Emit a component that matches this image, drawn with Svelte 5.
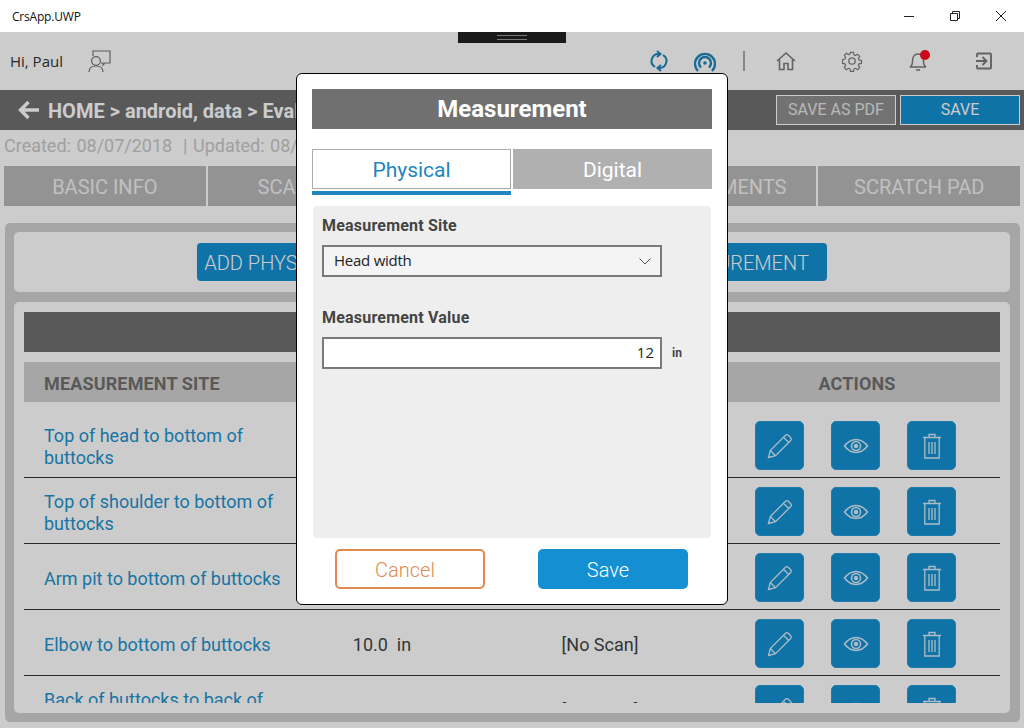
<script lang="ts">
  const tabs = ['BASIC INFO', 'SCAN INFO', 'PHOTOS', 'ATTACHMENTS', 'SCRATCH PAD'];
  const rows = [
    { site: 'Top of head to bottom of buttocks', value: '10.0', scan: '[No Scan]' },
    { site: 'Top of shoulder to bottom of buttocks', value: '10.0', scan: '[No Scan]' },
    { site: 'Arm pit to bottom of buttocks', value: '10.0', scan: '[No Scan]' },
    { site: 'Elbow to bottom of buttocks', value: '10.0', scan: '[No Scan]' },
    { site: 'Back of buttocks to back of knee', value: '10.0', scan: '[No Scan]' }
  ];

  let activeTab = $state('physical');
  let amount = $state('12');
</script>

<div class="window">
  <header class="titlebar">
    <span class="app-name">CrsApp.UWP</span>
    <div class="win-controls">
      <svg width="12" height="12" viewBox="0 0 12 12"><path d="M1 6.500h10" stroke="#222" fill="none"/></svg>
      <svg width="12" height="12" viewBox="0 0 12 12"><path d="M1.500 3.500h7v7h-7zM3.500 3.500v-2h7v7h-2" stroke="#222" fill="none"/></svg>
      <svg width="12" height="12" viewBox="0 0 12 12"><path d="M1 1l10 10M11 1L1 11" stroke="#222" fill="none"/></svg>
    </div>
  </header>

  <div class="app">
    <div class="topbar">
      <span class="greeting">Hi, Paul</span>
      <svg class="user-icon" width="24" height="24" viewBox="0 0 24 24" fill="none" stroke="#777" stroke-width="1.200">
        <path d="M6 7V2h17v12h-5l-2 2v-2h-2"/>
        <circle cx="9" cy="12" r="4.400"/>
        <path d="M2 23c0-4 3-6 7-6s7 2 7 6"/>
      </svg>
      <div class="top-icons">
        <svg class="ic-sync" width="18" height="22" viewBox="0 0 18 22" fill="none" stroke="#1f86ba" stroke-width="2">
          <path d="M9 4A7 7 0 0 0 5 17"/>
          <path d="M9 18A7 7 0 0 0 13 5"/>
          <path d="M7 1l3.500 3L7 7M11 15l-3.500 3 3.500 3"/>
        </svg>
        <svg class="ic-signal" width="22" height="24" viewBox="0 0 22 24" fill="none" stroke="#1f86ba" stroke-width="2.400">
          <path d="M4 20a10 10 0 1 1 14 0"/>
          <path d="M7 16.500a6 6 0 1 1 8 0"/>
          <circle cx="11" cy="12" r="1.800" fill="#1f86ba" stroke="none"/>
        </svg>
        <span class="divider"></span>
        <svg class="ic-home" width="20" height="20" viewBox="0 0 20 20" fill="none" stroke="#7c7c7c" stroke-width="1.600">
          <path d="M1 10l9-8 9 8M3.500 8v10.500h4.500v-6h4v6h4.500V8"/>
        </svg>
        <svg class="ic-gear" width="22" height="22" viewBox="0 0 22 22" fill="none" stroke="#7c7c7c" stroke-width="1.300">
          <circle cx="11" cy="11" r="3.200"/>
          <path d="M9.300 1.500h3.400l.5 2.700 1.700.7 2.300-1.500 2.400 2.400-1.500 2.300.7 1.700 2.700.5v3.400l-2.700.5-.7 1.700 1.500 2.300-2.400 2.400-2.300-1.500-1.700.7-.5 2.700H9.300l-.5-2.700-1.700-.7-2.300 1.500-2.400-2.400 1.500-2.300-.7-1.700-2.700-.5V9.300l2.700-.5.7-1.700-1.500-2.300 2.400-2.400 2.300 1.500 1.700-.7z" transform="translate(1.100 1.100) scale(.9)"/>
        </svg>
        <span class="bell">
          <svg width="20" height="22" viewBox="0 0 20 22" fill="none" stroke="#7c7c7c" stroke-width="1.500">
            <path d="M2 17c2-1 2.500-3 2.500-6 0-4 2-7 5.500-7s5.500 3 5.500 7c0 3 .5 5 2.500 6zM8 20h4"/>
          </svg>
          <i class="dot"></i>
        </span>
        <svg class="ic-exit" width="18" height="18" viewBox="0 0 18 18" fill="none" stroke="#7c7c7c" stroke-width="1.900">
          <path d="M2 5V2.500A1 1 0 0 1 3 1.500h12a1 1 0 0 1 1 1v13a1 1 0 0 1-1 1H3a1 1 0 0 1-1-1V13M1 9h10M7.500 5l4 4-4 4"/>
        </svg>
      </div>
    </div>

    <div class="crumbbar">
      <svg width="21" height="20" viewBox="0 0 21 20" fill="none" stroke="#fff" stroke-width="3.400">
        <path d="M10.500 2L2.500 10l8 8M3 10h18"/>
      </svg>
      <span class="crumbs">HOME &gt; android, data &gt; Evaluation</span>
      <button class="btn-pdf">SAVE AS PDF</button>
      <button class="btn-save">SAVE</button>
    </div>

    <div class="dates">Created: 08/07/2018 &nbsp;| Updated: 08/07/2018</div>

    <nav class="tabs">
      {#each tabs as tab}
        <div class="tab">{tab}</div>
      {/each}
    </nav>

    <main class="panel">
      <div class="add-card">
        <button class="btn-add first">ADD PHYSICAL MEASUREMENT</button>
        <button class="btn-add second">ADD DIGITAL MEASUREMENT</button>
      </div>

      <section class="table-card">
        <div class="table-title"></div>
        <div class="row-grid table-head">
          <span>MEASUREMENT SITE</span>
          <span class="center">VALUE</span>
          <span class="center">SCAN</span>
          <span class="center actions-head">ACTIONS</span>
        </div>
        <div class="rows">
          {#each rows as row}
            <div class="row-grid row">
              <span class="site">{row.site}</span>
              <span class="center cell">{row.value}&nbsp; in</span>
              <span class="center cell">{row.scan}</span>
              <div class="actions">
                <button class="act" aria-label="Edit">
                  <svg width="26" height="26" viewBox="0 0 26 26" fill="none" stroke="#d8ecf7" stroke-width="1.300">
                    <path d="M1.500 24.500l1.800-7L18.500 2.300a2 2 0 0 1 2.800 0l2.400 2.400a2 2 0 0 1 0 2.800L8.500 22.700zM3.300 17.500l5.200 5.200M16.500 4.300l5.200 5.200"/>
                  </svg>
                </button>
                <button class="act" aria-label="View">
                  <svg width="26" height="16" viewBox="0 0 26 16" fill="none" stroke="#d8ecf7" stroke-width="1.500">
                    <path d="M1.500 8C5 3.500 9 1.500 13 1.500S21 3.500 24.500 8C21 12.500 17 14.500 13 14.500S5 12.500 1.500 8z"/>
                    <circle cx="13" cy="8" r="4.500"/>
                    <circle cx="13" cy="8" r="1.500" fill="#d8ecf7"/>
                  </svg>
                </button>
                <button class="act" aria-label="Delete">
                  <svg width="20" height="26" viewBox="0 0 20 26" fill="none" stroke="#d8ecf7" stroke-width="1.300">
                    <path d="M1 4.500h18M7 4.500V1.500h6v3M2.800 4.500v20.500h14.400V4.500M7 9v12M10 9v12M13 9v12"/>
                  </svg>
                </button>
              </div>
            </div>
          {/each}
        </div>
      </section>
    </main>

    <div class="scrim"></div>
    <div class="debug-strip"><i></i></div>

    <div class="dialog">
      <h2 class="dlg-title">Measurement</h2>
      <div class="dlg-tabs">
        <button class="dlg-tab" class:on={activeTab === 'physical'} onclick={() => (activeTab = 'physical')}>Physical</button>
        <button class="dlg-tab" class:on={activeTab === 'digital'} onclick={() => (activeTab = 'digital')}>Digital</button>
      </div>
      <div class="dlg-body">
        <div class="field-label">Measurement Site</div>
        <div class="select">
          <span>Head width</span>
          <svg width="12" height="7" viewBox="0 0 12 7" fill="none" stroke="#555"><path d="M.5.500L6 6 11.500.500"/></svg>
        </div>
        <div class="field-label second">Measurement Value</div>
        <div class="value-row">
          <input class="value" bind:value={amount} />
          <span class="unit">in</span>
        </div>
      </div>
      <div class="dlg-actions">
        <button class="btn-cancel">Cancel</button>
        <button class="btn-ok">Save</button>
      </div>
    </div>
  </div>
</div>

<style>
  :global(body) {
    margin: 0;
    overflow: hidden;
  }

  .window {
    width: 1024px;
    height: 728px;
    display: flex;
    flex-direction: column;
    overflow: hidden;
    background: #fff;
    font-family: Roboto, sans-serif;
  }

  button {
    font-family: inherit;
    padding: 0;
    cursor: pointer;
  }

  .titlebar {
    height: 32px;
    flex: none;
    display: flex;
    align-items: center;
    justify-content: space-between;
    padding: 0 17px 0 12px;
  }

  .app-name {
    font: 12px "Open Sans", sans-serif;
    letter-spacing: -0.2px;
    color: #111;
  }

  .win-controls {
    display: flex;
    gap: 34px;
  }

  .app {
    flex: 1;
    position: relative;
    overflow: hidden;
    display: flex;
    flex-direction: column;
  }

  .topbar {
    height: 58px;
    flex: none;
    display: flex;
    align-items: center;
    padding-left: 10px;
  }

  .greeting {
    font: 15px "Open Sans", sans-serif;
    color: #333;
  }

  .user-icon {
    margin-left: 24px;
  }

  .top-icons {
    margin-left: auto;
    display: flex;
    align-items: center;
    padding-right: 31px;
  }

  .ic-sync { margin-right: 26px; }
  .ic-signal { margin: 3px 27px 0 0; }
  .divider {
    width: 2px;
    height: 20px;
    background: #a8a8a8;
    margin-right: 31px;
  }
  .ic-home { margin-right: 45px; }
  .ic-gear { margin-right: 45px; }
  .bell {
    position: relative;
    display: flex;
    margin-right: 47px;
  }
  .dot {
    position: absolute;
    top: 0;
    right: -2px;
    width: 10px;
    height: 10px;
    border-radius: 50%;
    background: #ff0a22;
  }

  .crumbbar {
    height: 40px;
    flex: none;
    background: #707070;
    display: flex;
    align-items: center;
    padding: 0 4px 0 18px;
    gap: 4px;
  }

  .crumbs {
    margin-left: 5px;
    padding-top: 2px;
    font-size: 20px;
    font-weight: 700;
    color: #fff;
    margin-right: auto;
  }

  .btn-pdf,
  .btn-save {
    width: 120px;
    height: 30px;
    font-size: 16px;
    box-sizing: border-box;
    border: 1px solid #fff;
    padding-bottom: 2px;
    color: #fff;
  }

  .btn-pdf {
    background: #8f8f8f;
    color: #e6e6e6;
  }

  .btn-save {
    background: #1490d2;
  }

  .dates {
    height: 36px;
    flex: none;
    line-height: 31px;
    padding-left: 4px;
    font-size: 18px;
    word-spacing: 1px;
    color: #c8c8c8;
    white-space: nowrap;
  }

  .tabs {
    height: 40px;
    flex: none;
    margin: 0 4px;
    display: grid;
    grid-template-columns: repeat(5, 1fr);
    gap: 2px;
  }

  .tab {
    background: #b8b8b8;
    color: #f0f0f0;
    font-size: 20px;
    padding-top: 2px;
    display: flex;
    align-items: center;
    justify-content: center;
  }

  .panel {
    margin: 17px 4px 0 5px;
    height: 499px;
    flex: none;
    box-sizing: border-box;
    padding: 9px 10px 9px 9px;
    background: #d0d0d0;
    border-radius: 5px;
    display: flex;
    flex-direction: column;
    gap: 10px;
  }

  .add-card {
    height: 60px;
    flex: none;
    background: #fff;
    border-radius: 5px;
    display: flex;
    align-items: center;
    justify-content: center;
    gap: 20px;
  }

  .btn-add {
    width: 305px;
    height: 38px;
    border: 0;
    border-radius: 4px;
    background: #1490d2;
    color: #fff;
    font-size: 20px;
    font-weight: 300;
    padding-top: 2px;
  }

  .btn-add.first {
    padding-right: 6px;
  }

  .btn-add.second {
    padding-left: 4px;
  }

  .table-card {
    flex: 1;
    min-height: 0;
    background: #fff;
    border-radius: 5px;
    padding: 10px 10px 10px;
    display: flex;
    flex-direction: column;
  }

  .table-title {
    height: 40px;
    flex: none;
    background: #707070;
  }

  .row-grid {
    display: grid;
    grid-template-columns: 290px 136px 300px 250px;
    align-items: center;
  }

  .table-head {
    height: 40px;
    flex: none;
    box-sizing: border-box;
    padding-top: 2px;
    margin: 10px 0;
    background: #d0d0d0;
    color: #707070;
    font-size: 18px;
    font-weight: 700;
    letter-spacing: 0.15px;
  }

  .table-head span:first-child {
    padding-left: 20px;
  }

  .center {
    text-align: center;
  }

  .actions-head {
    padding-right: 36px;
  }

  .rows {
    flex: 1;
    min-height: 0;
    overflow: hidden;
  }

  .row {
    height: 66px;
    box-sizing: border-box;
    padding-top: 2px;
    border-bottom: 1px solid #333;
    font-size: 18px;
    color: #444;
    line-height: 22px;
  }

  .site {
    padding: 2px 30px 0 20px;
    color: #1e92cc;
  }

  .cell {
    padding-top: 2px;
  }

  .actions {
    display: flex;
    gap: 27px;
    padding-left: 5px;
  }

  .act {
    width: 49px;
    height: 49px;
    box-sizing: border-box;
    border: 1px solid #2a9ad6;
    border-radius: 5px;
    background: #1490d2;
    display: flex;
    align-items: center;
    justify-content: center;
  }

  .scrim {
    position: absolute;
    inset: 0;
    background: rgba(0, 0, 0, 0.2);
  }

  .debug-strip {
    position: absolute;
    top: 0;
    left: 458px;
    width: 108px;
    height: 11px;
    background: #1a1a1a;
    display: flex;
    justify-content: center;
    align-items: center;
  }

  .debug-strip i {
    width: 30px;
    height: 3px;
    border-top: 1px solid #777;
    border-bottom: 1px solid #777;
  }

  .dialog {
    position: absolute;
    left: 296px;
    top: 41px;
    width: 432px;
    height: 532px;
    box-sizing: border-box;
    padding: 15px;
    border: 1px solid #000;
    border-radius: 6px;
    background: #fff;
    display: flex;
    flex-direction: column;
  }

  .dlg-title {
    margin: 0;
    height: 40px;
    background: #707070;
    color: #fff;
    font-size: 24px;
    font-weight: 700;
    line-height: 40px;
    text-align: center;
  }

  .dlg-tabs {
    margin-top: 20px;
    display: grid;
    grid-template-columns: 199px 199px;
    gap: 2px;
  }

  .dlg-tab {
    height: 40px;
    border: 0;
    padding-top: 2px;
    background: #b0b0b0;
    color: #fff;
    font-size: 21px;
    position: relative;
  }

  .dlg-tab.on {
    background: #fff;
    border: 1px solid #aaa;
    color: #1f86c0;
  }

  .dlg-tab.on::after {
    content: '';
    position: absolute;
    left: -1px;
    right: -1px;
    bottom: -7px;
    height: 4px;
    background: #1f86c0;
  }

  .dlg-body {
    margin: 17px 1px 0;
    height: 332px;
    flex: none;
    box-sizing: border-box;
    padding: 9px 9px;
    background: #eee;
    border-radius: 4px;
  }

  .field-label {
    height: 20px;
    line-height: 22px;
    font-size: 16px;
    font-weight: 700;
    letter-spacing: 0.2px;
    color: #444;
  }

  .field-label.second {
    margin-top: 30px;
  }

  .select {
    margin-top: 10px;
    width: 340px;
    height: 32px;
    box-sizing: border-box;
    border: 2px solid #7a7a7a;
    background: #f4f4f4;
    padding: 0 9px 2px 10px;
    display: flex;
    align-items: center;
    justify-content: space-between;
    font: 15px "Open Sans", sans-serif;
    letter-spacing: -0.25px;
    color: #222;
  }

  .select svg {
    margin-top: 2px;
  }

  .value-row {
    margin-top: 10px;
    display: flex;
    align-items: center;
  }

  .value {
    width: 340px;
    height: 32px;
    box-sizing: border-box;
    border: 2px solid #7a7a7a;
    background: #fff;
    padding: 0 6px 2px;
    text-align: right;
    font: 15px "Open Sans", sans-serif;
    color: #222;
    outline: none;
  }

  .unit {
    margin-left: 10px;
    font-size: 12px;
    font-weight: 700;
    color: #444;
  }

  .dlg-actions {
    margin-top: 11px;
    padding: 0 24px 0 23px;
    display: flex;
    justify-content: space-between;
  }

  .btn-cancel,
  .btn-ok {
    width: 150px;
    height: 40px;
    box-sizing: border-box;
    border-radius: 5px;
    font-size: 20px;
    font-weight: 300;
    padding: 2px 10px 0 0;
  }

  .btn-cancel {
    background: #fff;
    border: 2px solid #e08a4f;
    color: #e08a4f;
  }

  .btn-ok {
    border: 0;
    background: #1490d2;
    color: #fff;
  }
</style>
